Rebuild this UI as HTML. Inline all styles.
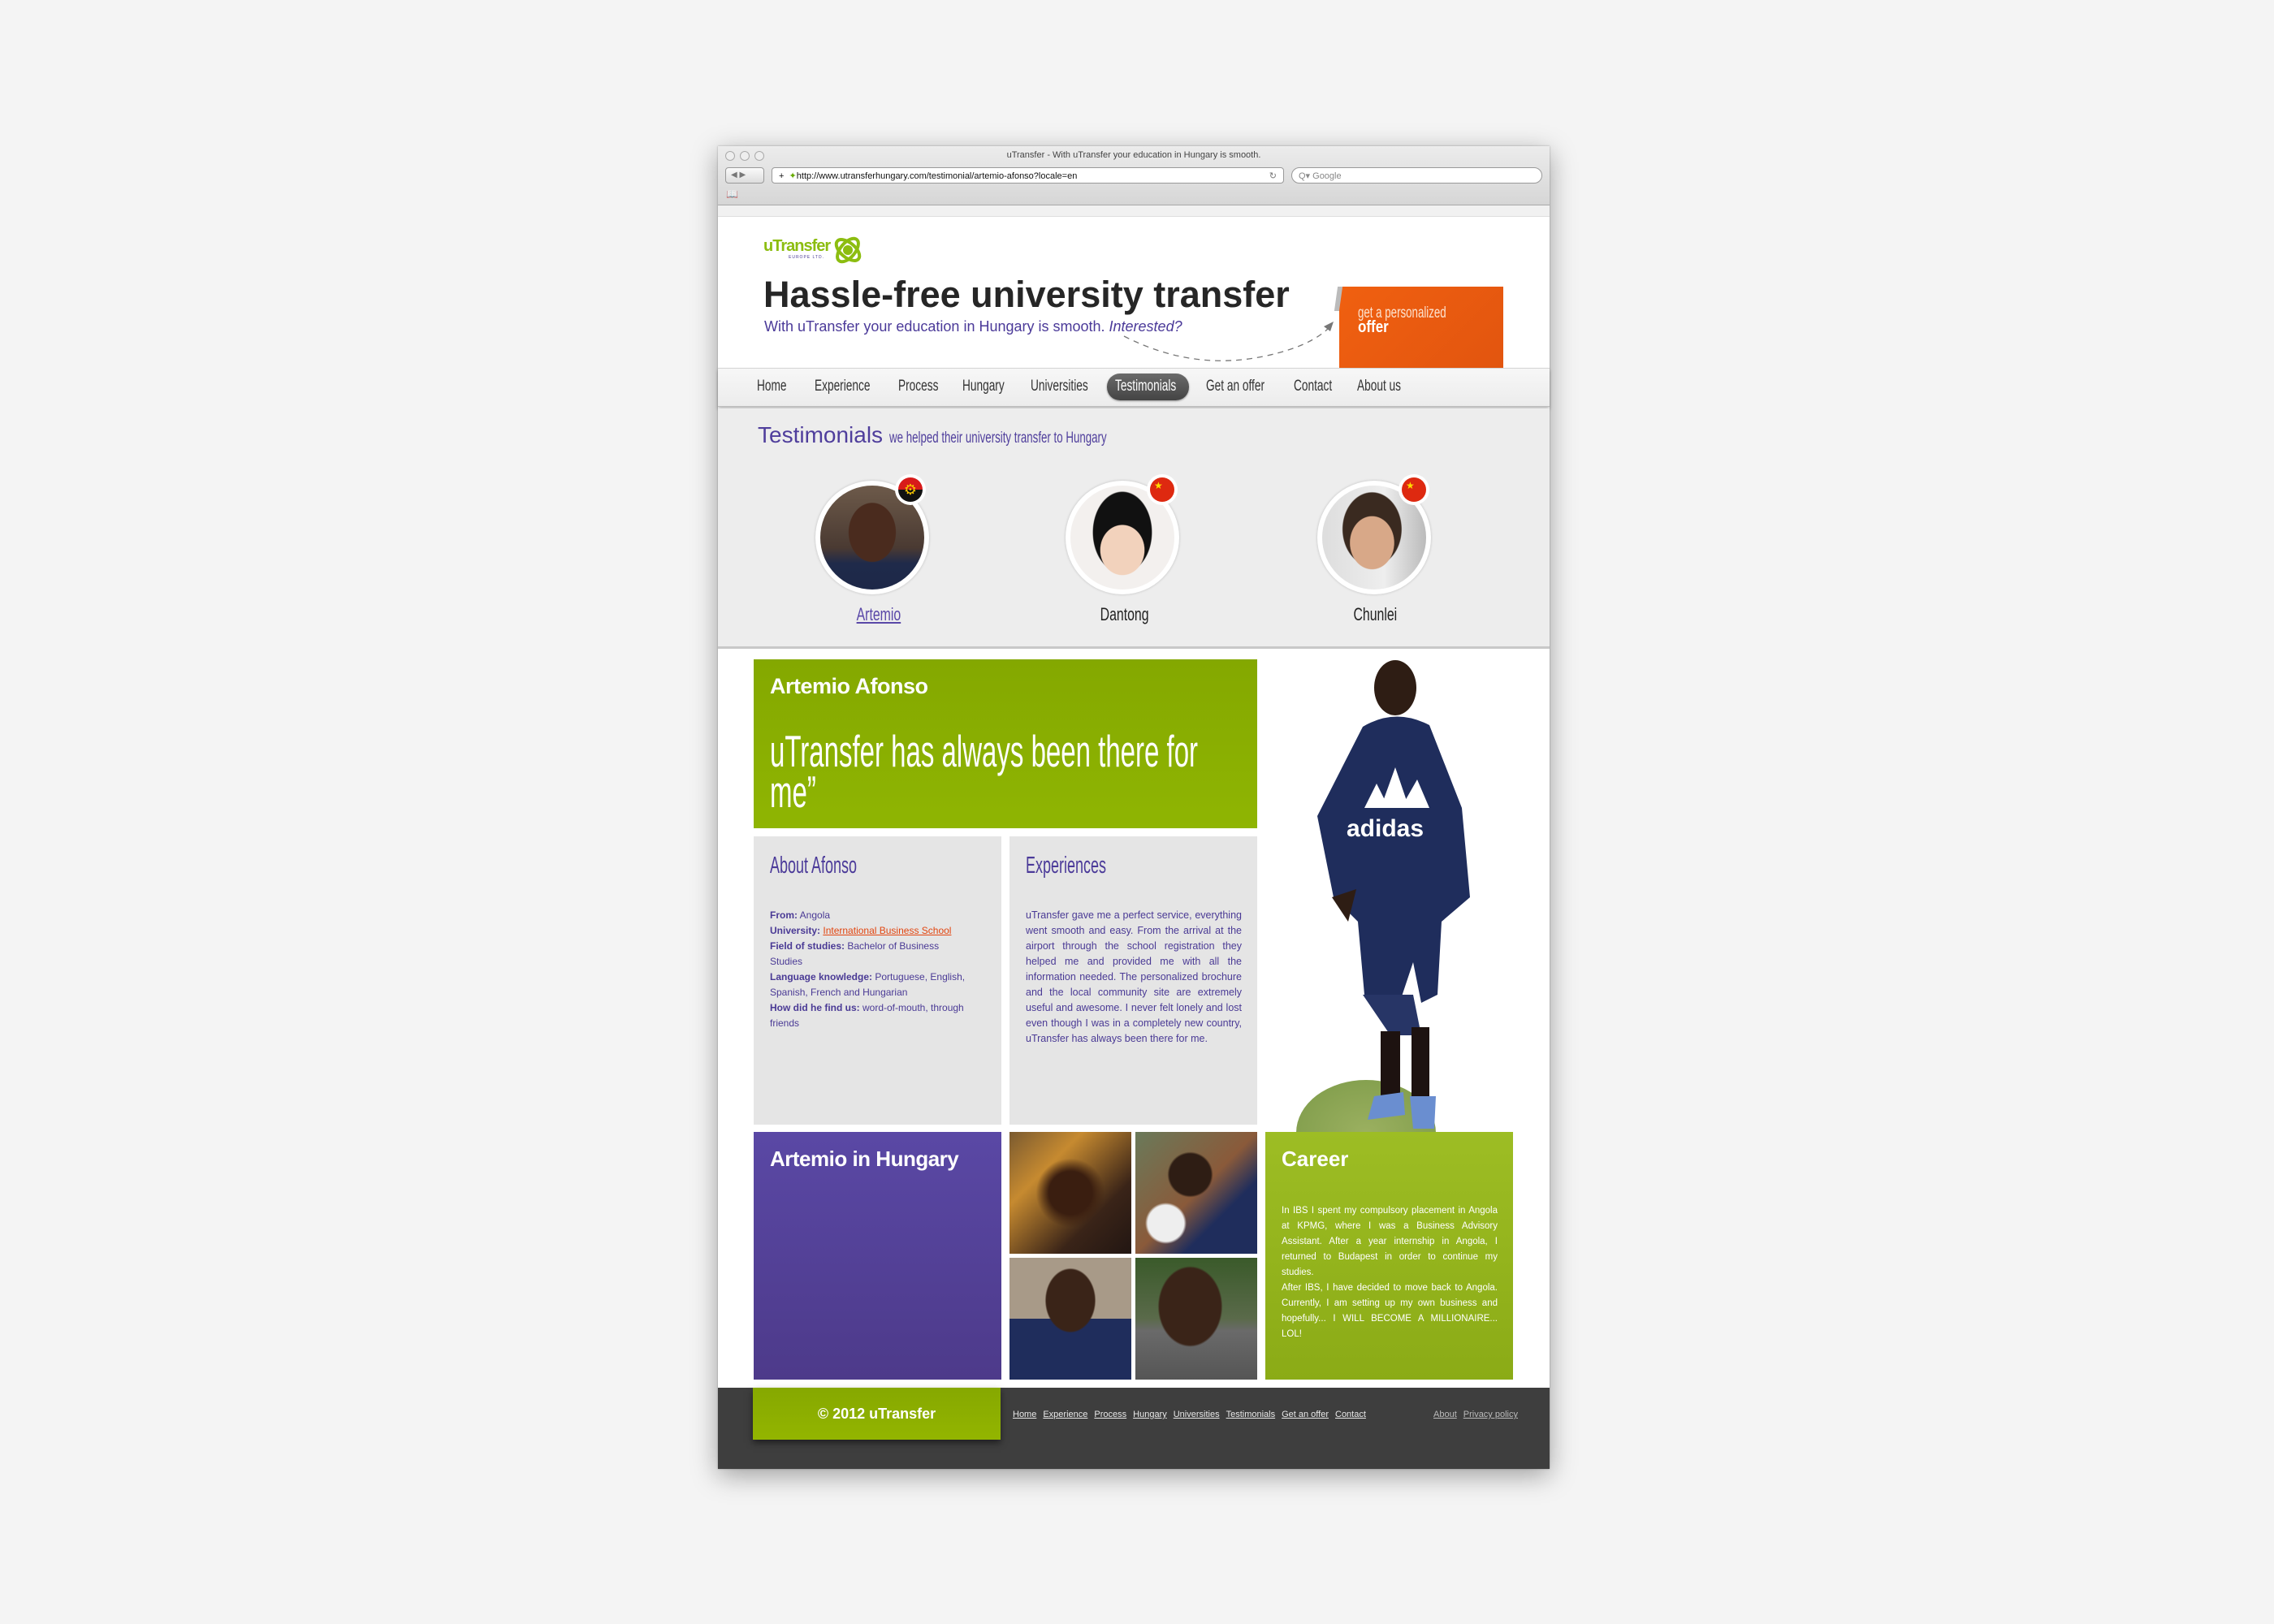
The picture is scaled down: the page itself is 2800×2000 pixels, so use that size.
<!DOCTYPE html>
<html><head><meta charset="utf-8">
<style>
*{margin:0;padding:0;box-sizing:border-box}
body{width:2800px;height:2000px;background:#f4f4f4;position:relative;overflow:hidden;font-family:"Liberation Sans",sans-serif}
.a{position:absolute}
.n{display:inline-block;transform-origin:0 0;white-space:nowrap}
.nav span{position:absolute;top:465px;font-size:19px;color:#333;transform:scaleX(.72);transform-origin:0 0;white-space:nowrap}
.body{font-size:12px;line-height:19px;color:#4a3a95}
.body b{font-weight:bold}
.fl a{color:#e8e8e8;text-decoration:underline;font-size:11px;margin-right:8px}
</style></head><body>
<div class="a" style="left:884px;top:180px;width:1024px;height:1629px;background:#fff;box-shadow:0 8px 30px rgba(0,0,0,.35),0 0 2px rgba(0,0,0,.3)"></div>
<div class="a" style="left:884px;top:180px;width:1024px;height:73px;background:linear-gradient(#ececec,#d6d6d6);border-bottom:1px solid #a8a8a8"></div>
<div class="a" style="left:893px;top:186px;width:12px;height:12px;border-radius:50%;border:1px solid #aaa;background:#eee"></div>
<div class="a" style="left:911px;top:186px;width:12px;height:12px;border-radius:50%;border:1px solid #aaa;background:#eee"></div>
<div class="a" style="left:929px;top:186px;width:12px;height:12px;border-radius:50%;border:1px solid #aaa;background:#eee"></div>
<div class="a" style="left:884px;top:185px;width:1024px;text-align:center;font-size:11px;color:#444">uTransfer - With uTransfer your education in Hungary is smooth.</div>
<div class="a" style="left:893px;top:206px;width:48px;height:20px;border:1px solid #999;border-radius:4px;background:linear-gradient(#fafafa,#ddd);font-size:10px;color:#777;padding:3px 0 0 6px">◀ ▶</div>
<div class="a" style="left:950px;top:206px;width:631px;height:20px;border:1px solid #999;border-radius:4px;background:#fff;font-size:11px;color:#111;padding:3px 0 0 8px">+ &nbsp;<span style="color:#6a0">✦</span>http://www.utransferhungary.com/testimonial/artemio-afonso?locale=en<span style="position:absolute;right:8px;color:#777">↻</span></div>
<div class="a" style="left:1590px;top:206px;width:309px;height:20px;border:1px solid #999;border-radius:10px;background:#fff;font-size:11px;color:#888;padding:3px 0 0 8px">Q▾ Google</div>
<div class="a" style="left:894px;top:232px;font-size:12px;color:#666">📖</div>
<div class="a" style="left:884px;top:253px;width:1024px;height:14px;background:#f1f1f1;border-bottom:1px solid #ddd"></div>
<div class="a" style="left:940px;top:292px;font-size:20px;font-weight:bold;color:#8cbd10;letter-spacing:-1px">uTransfer</div>
<div class="a" style="left:971px;top:314px;font-size:5px;color:#4a3a95;letter-spacing:1px">EUROPE LTD.</div>
<svg class="a" style="left:1024px;top:288px" width="40" height="40" viewBox="0 0 40 40"><ellipse cx="20" cy="20" rx="17" ry="9" fill="none" stroke="#8cbd10" stroke-width="4" transform="rotate(-50 20 20)"/><ellipse cx="20" cy="20" rx="17" ry="9" fill="none" stroke="#8cbd10" stroke-width="4" transform="rotate(40 20 20)"/><circle cx="20" cy="20" r="6" fill="#8cbd10"/></svg>
<div class="a" style="left:940px;top:337px;font-size:45px;font-weight:bold;color:#262626;white-space:nowrap">Hassle-free university transfer</div>
<div class="a" style="left:941px;top:392px;font-size:18px;color:#4b3a99;white-space:nowrap">With uTransfer your education in Hungary is smooth. <i>Interested?</i></div>
<svg class="a" style="left:1380px;top:390px" width="270" height="60"><path d="M4 24 Q 90 68 180 48 Q 235 36 258 12" fill="none" stroke="#777" stroke-width="1.3" stroke-dasharray="7 6"/><path d="M262 6 L250 12 L258 18Z" fill="#777"/></svg>
<div class="a" style="left:1649px;top:353px;width:202px;height:100px;background:linear-gradient(135deg,#f06010,#e2550f)"></div>
<div class="a" style="left:1645px;top:353px;width:6px;height:30px;background:#bbb;transform:skewX(-8deg)"></div>
<div class="a" style="left:1672px;top:378px;color:#fde3d0;line-height:16px"><span class="n" style="font-size:19px;transform:scaleX(.7)">get a personalized</span><br><span class="n" style="font-size:20px;font-weight:bold;color:#fff;transform:scaleX(.85)">offer</span></div>
<div class="a" style="left:884px;top:453px;width:1024px;height:48px;background:linear-gradient(#f7f7f7,#ececec);border-top:1px solid #d5d5d5;border-bottom:1px solid #bdbdbd;box-shadow:0 3px 4px rgba(0,0,0,.25)"></div>
<div class="a" style="left:1363px;top:460px;width:101px;height:33px;border-radius:16px;background:linear-gradient(#6a6a6a,#444);box-shadow:0 1px 2px rgba(0,0,0,.4)"></div>
<div class="nav">
<span style="left:932px">Home</span><span style="left:1003px">Experience</span><span style="left:1106px">Process</span><span style="left:1185px">Hungary</span><span style="left:1269px">Universities</span><span style="left:1373px;color:#fff">Testimonials</span><span style="left:1485px">Get an offer</span><span style="left:1593px">Contact</span><span style="left:1671px">About us</span>
</div>
<div class="a" style="left:884px;top:503px;width:1024px;height:296px;background:#ededed;border-bottom:3px solid #c8c8c8"></div>
<div class="a" style="left:933px;top:520px;font-size:28px;color:#4f3e9c;white-space:nowrap">Testimonials <span class="n" style="font-size:19px;transform:scaleX(.7);vertical-align:0">we helped their university transfer to Hungary</span></div>
<div class="a" style="left:1004px;top:592px;width:140px;height:140px;border-radius:50%;background:#fff;box-shadow:0 0 3px rgba(0,0,0,.2)"></div>
<div class="a" style="left:1010px;top:598px;width:128px;height:128px;border-radius:50%;background:radial-gradient(ellipse 32% 40% at 50% 45%,#4a2b1e 70%,transparent 72%),linear-gradient(#6d5a4a,#4a3a32 60%,#1f2a4a 75%,#1d2848)"></div>
<div class="a" style="left:1312px;top:592px;width:140px;height:140px;border-radius:50%;background:#fff;box-shadow:0 0 3px rgba(0,0,0,.2)"></div>
<div class="a" style="left:1318px;top:598px;width:128px;height:128px;border-radius:50%;background:radial-gradient(ellipse 30% 34% at 50% 62%,#f2d2bc 70%,transparent 72%),radial-gradient(ellipse 40% 55% at 50% 45%,#111 70%,transparent 72%),#f3f0ee"></div>
<div class="a" style="left:1622px;top:592px;width:140px;height:140px;border-radius:50%;background:#fff;box-shadow:0 0 3px rgba(0,0,0,.2)"></div>
<div class="a" style="left:1628px;top:598px;width:128px;height:128px;border-radius:50%;background:radial-gradient(ellipse 30% 36% at 48% 55%,#d8a888 70%,transparent 72%),radial-gradient(ellipse 40% 50% at 48% 42%,#3a2a20 70%,transparent 72%),linear-gradient(90deg,#ddd,#eee 60%,#bbb)"></div>
<div class="a" style="left:1102px;top:584px;width:38px;height:38px;border-radius:50%;background:#fff"></div>
<div class="a" style="left:1106px;top:588px;width:30px;height:30px;border-radius:50%;background:linear-gradient(#d81a1a 50%,#111 50%);color:#f5c400;font-size:18px;text-align:center;line-height:30px">⚙</div>
<div class="a" style="left:1412px;top:584px;width:38px;height:38px;border-radius:50%;background:#fff"></div>
<div class="a" style="left:1416px;top:588px;width:30px;height:30px;border-radius:50%;background:#de2910;color:#ffde00;font-size:12px;padding:3px 0 0 5px">★</div>
<div class="a" style="left:1722px;top:584px;width:38px;height:38px;border-radius:50%;background:#fff"></div>
<div class="a" style="left:1726px;top:588px;width:30px;height:30px;border-radius:50%;background:#de2910;color:#ffde00;font-size:12px;padding:3px 0 0 5px">★</div>
<div class="a" style="left:1044px;top:744px;width:60px;text-align:center"><span class="n" style="font-size:22px;color:#5a48a8;text-decoration:underline;transform:scaleX(.72);transform-origin:50% 0">Artemio</span></div>
<div class="a" style="left:1343px;top:744px;width:80px;text-align:center"><span class="n" style="font-size:22px;color:#222;transform:scaleX(.72);transform-origin:50% 0">Dantong</span></div>
<div class="a" style="left:1653px;top:744px;width:80px;text-align:center"><span class="n" style="font-size:22px;color:#222;transform:scaleX(.72);transform-origin:50% 0">Chunlei</span></div>
<div class="a" style="left:928px;top:812px;width:620px;height:208px;background:linear-gradient(#84a800,#8fb502)"></div>
<div class="a" style="left:948px;top:830px;font-size:27px;font-weight:bold;color:#fff;letter-spacing:-.5px">Artemio Afonso</div>
<div class="a" style="left:948px;top:900px;color:#fff;font-size:55px;line-height:50px"><span class="n" style="transform:scaleX(.6)">uTransfer has always been there for<br>me”</span></div>
<div class="a" style="left:928px;top:1030px;width:305px;height:355px;background:#e5e5e5"></div>
<div class="a" style="left:1243px;top:1030px;width:305px;height:355px;background:#e5e5e5"></div>
<div class="a" style="left:948px;top:1050px;color:#4b3a99;font-size:29px"><span class="n" style="transform:scaleX(.62)">About Afonso</span></div>
<div class="a" style="left:1263px;top:1050px;color:#4b3a99;font-size:29px"><span class="n" style="transform:scaleX(.62)">Experiences</span></div>
<div class="a body" style="left:948px;top:1118px;width:275px"><b>From:</b> Angola<br><b>University:</b> <span style="color:#e2450f;text-decoration:underline">International Business School</span><br><b>Field of studies:</b> Bachelor of Business<br>Studies<br><b>Language knowledge:</b> Portuguese, English,<br>Spanish, French and Hungarian<br><b>How did he find us:</b> word-of-mouth, through<br>friends</div>
<div class="a body" style="left:1263px;top:1118px;width:266px;text-align:justify;font-size:12.5px">uTransfer gave me a perfect service, everything went smooth and easy. From the arrival at the airport through the school registration they helped me and provided me with all the information needed. The personalized brochure and the local community site are extremely useful and awesome. I never felt lonely and lost even though I was in a completely new country, uTransfer has always been there for me.</div>
<div class="a" style="left:1596px;top:1330px;width:172px;height:130px;border-radius:50%;background:radial-gradient(#9bb060,#7c9a48);clip-path:inset(0 0 64px 0)"></div>
<svg class="a" style="left:1600px;top:805px" width="220" height="590" viewBox="0 0 220 590">
<ellipse cx="118" cy="42" rx="26" ry="34" fill="#2e1d14"/>
<path d="M78 90 Q118 66 160 88 L200 190 L210 300 L175 330 L170 420 L150 430 L140 380 L125 425 L80 420 L72 330 L42 300 L22 200 Z" fill="#1f2d5c"/>
<path d="M78 420 L140 420 L150 470 L112 470 Z" fill="#273566"/>
<path d="M60 330 L40 300 L70 290 Z" fill="#2e1d14"/>
<rect x="100" y="465" width="24" height="85" fill="#1d1210"/><rect x="138" y="460" width="22" height="85" fill="#1d1210"/>
<path d="M92 545 L128 540 L130 568 L84 574Z" fill="#6a8ed0"/><path d="M136 545 L168 545 L166 585 L140 585Z" fill="#6a8ed0"/>
<text x="58" y="225" font-family="Liberation Sans" font-weight="bold" font-size="30" fill="#fff">adidas</text>
<path d="M80 190 L95 160 L110 190Z M100 190 L118 140 L135 190Z M125 190 L145 155 L160 190Z" fill="#fff"/>
</svg>
<div class="a" style="left:928px;top:1394px;width:305px;height:305px;background:linear-gradient(#5a48a5,#4d3a8a)"></div>
<div class="a" style="left:948px;top:1412px;font-size:26px;font-weight:bold;color:#fff;letter-spacing:-.5px">Artemio in Hungary</div>
<div class="a" style="left:1243px;top:1394px;width:150px;height:150px;background:radial-gradient(circle at 50% 50%,#3a1e10 25%,transparent 40%),linear-gradient(135deg,#7a5a30,#c68a30 30%,#3a2418 70%,#221612)"></div>
<div class="a" style="left:1398px;top:1394px;width:150px;height:150px;background:radial-gradient(circle at 25% 75%,#eee 14%,transparent 16%),radial-gradient(circle at 45% 35%,#2e1d14 20%,transparent 22%),linear-gradient(135deg,#6a7a5a,#8a5a3a 50%,#1f2d5c 70%,#1f2d5c)"></div>
<div class="a" style="left:1243px;top:1549px;width:150px;height:150px;background:radial-gradient(ellipse 22% 28% at 50% 35%,#3a2418 90%,transparent 95%),linear-gradient(#a89a88 0 50%,#1f2d5c 50%)"></div>
<div class="a" style="left:1398px;top:1549px;width:150px;height:150px;background:radial-gradient(ellipse 28% 35% at 45% 40%,#3a2418 90%,transparent 95%),linear-gradient(#3a5a2a,#5a6a4a 50%,#6a6a6a 60%,#555)"></div>
<div class="a" style="left:1558px;top:1394px;width:305px;height:305px;background:linear-gradient(#9dbd24,#8bab16)"></div>
<div class="a" style="left:1578px;top:1412px;font-size:26px;font-weight:bold;color:#fff">Career</div>
<div class="a body" style="left:1578px;top:1482px;width:266px;color:#fff;text-align:justify;font-size:11.5px">In IBS I spent my compulsory placement in Angola at KPMG, where I was a Business Advisory Assistant. After a year internship in Angola, I returned to Budapest in order to continue my studies.<br>After IBS, I have decided to move back to Angola. Currently, I am setting up my own business and hopefully... I WILL BECOME A MILLIONAIRE... LOL!</div>
<div class="a" style="left:884px;top:1709px;width:1024px;height:100px;background:#3e3e3e"></div>
<div class="a" style="left:927px;top:1709px;width:305px;height:64px;background:linear-gradient(#86a800,#93b500);box-shadow:0 4px 8px rgba(0,0,0,.5);color:#fff;font-weight:bold;font-size:18px;text-align:center;line-height:64px">© 2012 uTransfer</div>
<div class="a fl" style="left:1247px;top:1732px;white-space:nowrap"><a>Home</a><a>Experience</a><a>Process</a><a>Hungary</a><a>Universities</a><a>Testimonials</a><a>Get an offer</a><a>Contact</a></div>
<div class="a fl" style="left:1765px;top:1732px;white-space:nowrap"><a style="color:#bbb">About</a><a style="color:#bbb">Privacy policy</a></div>
</body></html>
